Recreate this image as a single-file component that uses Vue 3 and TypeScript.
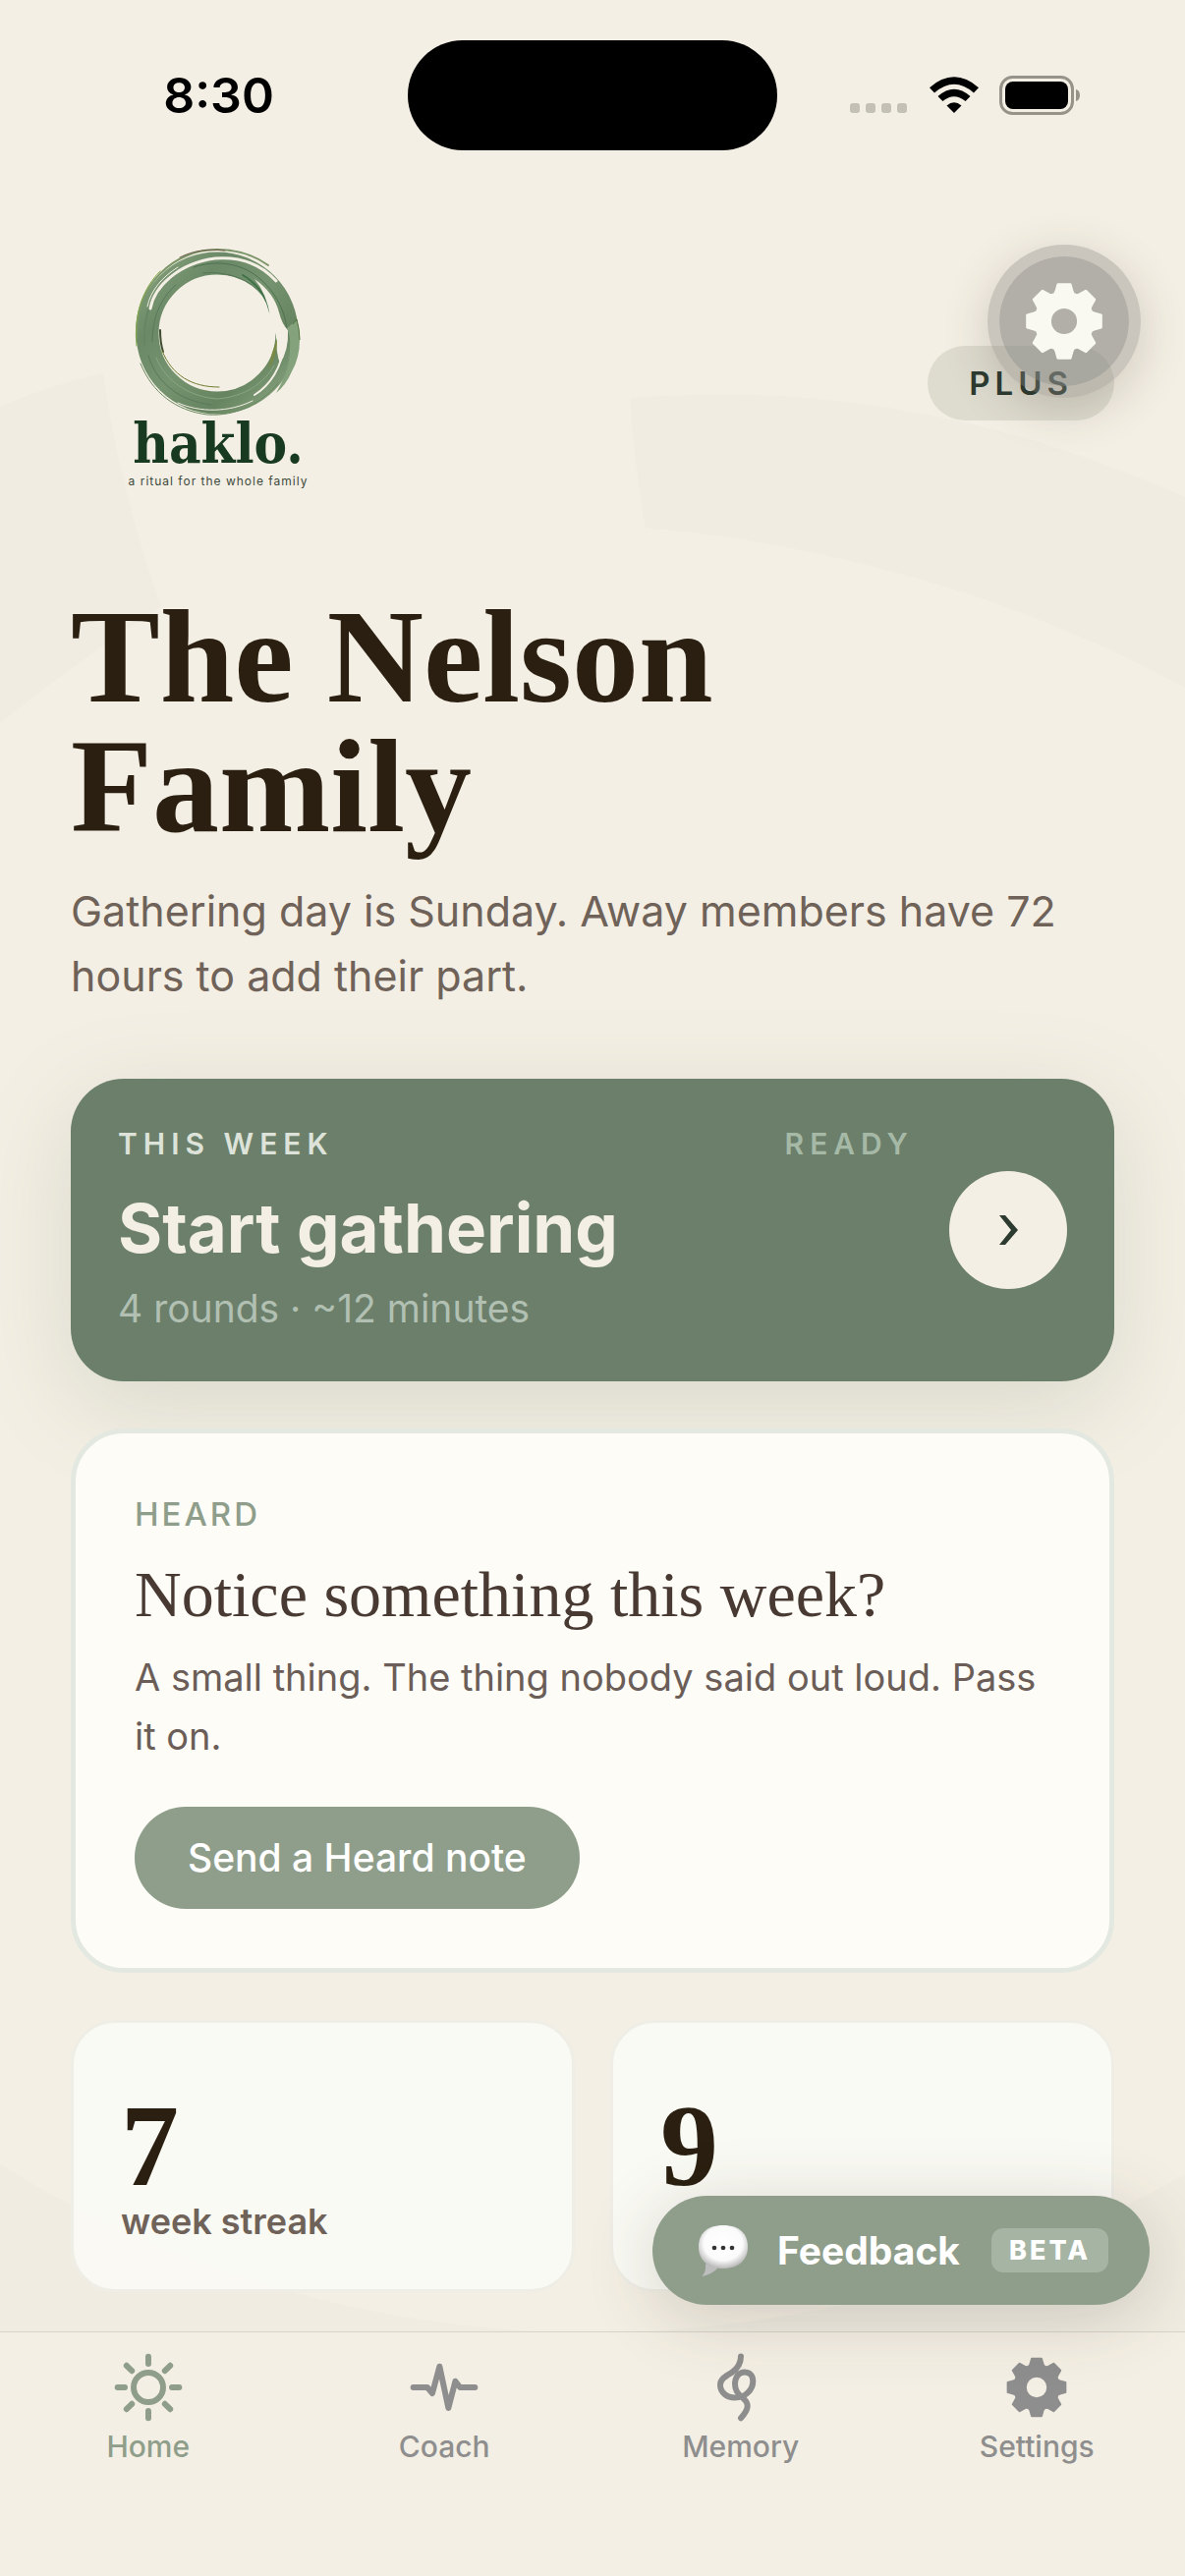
<script setup lang="ts">
interface Tab {
  id: string
  label: string
  active: boolean
}

interface Stat {
  value: number
  label: string
}

const tabs: Tab[] = [
  { id: 'home', label: 'Home', active: true },
  { id: 'coach', label: 'Coach', active: false },
  { id: 'memory', label: 'Memory', active: false },
  { id: 'settings', label: 'Settings', active: false },
]

const stats: Stat[] = [
  { value: 7, label: 'week streak' },
  { value: 9, label: '' },
]

// Outline of an eight-toothed cog centred on 0,0 with a radius of 100.
function cogPath(): string {
  const tooth: [number, number][] = [
    [-24, -71],
    [-21, -78],
    [-16, -96],
    [16, -96],
    [21, -78],
    [24, -71],
  ]
  const points: string[] = []
  for (let i = 0; i < 8; i++) {
    const a = (i * Math.PI) / 4
    for (const [x, y] of tooth) {
      const px = x * Math.cos(a) - y * Math.sin(a)
      const py = x * Math.sin(a) + y * Math.cos(a)
      points.push(`${px.toFixed(1)} ${py.toFixed(1)}`)
    }
  }
  return `M${points.join('L')}ZM37 0A37 37 0 1 0 -37 0A37 37 0 1 0 37 0Z`
}

const cog = cogPath()
</script>

<template>
  <div class="page">
    <svg class="backdrop" viewBox="0 0 1206 2622" preserveAspectRatio="none" aria-hidden="true">
      <path d="M0 414Q50 392 105 380Q122 500 164 617Q72 678 0 736Z" />
      <path d="M641 405Q930 382 1206 506V700Q960 566 657 537Q645 472 641 405Z" />
      <path d="M0 2203Q270 2370 600 2375Q930 2370 1206 2213V2400H0Z" />
    </svg>

    <div class="status">
      <time class="clock">8:30</time>
      <div class="island"></div>
      <div class="signals">
        <svg width="60" height="40" viewBox="0 0 60 40" aria-hidden="true">
          <g fill="#c3c0b5">
            <rect x="0" y="28" width="10" height="10" rx="3" />
            <rect x="16" y="28" width="10" height="10" rx="3" />
            <rect x="32" y="28" width="10" height="10" rx="3" />
            <rect x="48" y="28" width="10" height="10" rx="3" />
          </g>
        </svg>
        <svg width="52" height="40" viewBox="0 0 52 40" aria-hidden="true">
          <path d="M26 38L18.500 30.500Q26 24 33.500 30.500Z" />
          <path d="M9.500 21Q26 6.500 42.500 21L37.600 26Q26 16.500 14.400 26Z" />
          <path d="M1 12.200Q26 -9.500 51 12.200L46 17.400Q26 0 6 17.400Z" />
        </svg>
        <svg width="84" height="40" viewBox="0 0 84 40" aria-hidden="true">
          <rect x="1.500" y="1.500" width="73" height="37" rx="12" fill="none" stroke="#96938b" stroke-width="3" />
          <rect x="6" y="6" width="64" height="28" rx="8" />
          <path d="M78 14Q82 15 82 20Q82 25 78 26Z" fill="#96938b" />
        </svg>
      </div>
    </div>

    <header class="header">
      <div class="logo">
        <svg class="ring" viewBox="0 0 170 172" aria-hidden="true">
          <defs>
            <linearGradient id="brush" x1="0" y1="0" x2="1" y2="1">
              <stop offset="0" stop-color="#85a07c" />
              <stop offset="0.250" stop-color="#6b8966" />
              <stop offset="0.500" stop-color="#75936f" />
              <stop offset="0.750" stop-color="#66845f" />
              <stop offset="1" stop-color="#8ba683" />
            </linearGradient>
          </defs>
          <circle cx="84" cy="87" r="71" fill="none" stroke="url(#brush)" stroke-width="23" />
          <g fill="none" stroke-linecap="round">
            <path d="M2 92C0 38 40 2 84 2C106 2 122 8 136 18" stroke="#7c966a" stroke-width="2" />
            <path d="M46 10C60 3 74 1 92 3" stroke="#6b5a48" stroke-width="1" />
            <path d="M2 100C-1 68 8 42 26 24" stroke="#7fa84c" stroke-width="1" />
            <path d="M6 118C18 148 42 166 74 170C104 172 130 158 146 138" stroke="#6a8a60" stroke-width="1" />
            <path d="M10 100C8 66 20 40 42 24" stroke="#668663" stroke-width="2" />
            <path d="M18 96C18 72 26 52 42 38M14 110C22 138 46 156 78 160" stroke="#58795a" stroke-width="1" />
            <path d="M22 112C32 138 58 152 84 154C112 152 132 138 142 120" stroke="#88a682" stroke-width="1" />
            <path d="M60 20C90 10 122 18 142 48C150 60 154 72 155 84" stroke="#4f7152" stroke-width="1" />
            <path d="M26 84C26 94 27 100 29 106" stroke="#3d4d30" stroke-width="2" />
            <path d="M16 62C20 40 44 16 82 11C108 9 128 16 144 34" stroke="#f4efe4" stroke-width="3" />
            <path d="M13 60C16 44 28 30 44 20" stroke="#f4efe4" stroke-width="1" />
            <path d="M29 94C36 122 60 140 86 143" stroke="#f4efe4" stroke-width="2" />
            <path d="M28 105C38 130 58 142 86 142" stroke="#6f7d31" stroke-width="1" />
            <path d="M44 158C66 168 96 168 120 156" stroke="#f4efe4" stroke-width="1" />
            <path d="M152 98C150 122 138 140 122 150" stroke="#f4efe4" stroke-width="2" />
            <path d="M110 28C124 36 134 50 138 66" stroke="#3f7148" stroke-width="2" />
            <path d="M70 26C90 24 112 30 124 42" stroke="#557755" stroke-width="1" />
          </g>
          <path d="M122 32Q142 46 147 66Q150 78 156 84Q157 104 148 118Q144 108 144 90Q142 82 138 70Q134 46 122 32Z" fill="#f4efe4" />
          <path d="M145 92Q146 108 136 124Q139 108 145 92Z" fill="#7b8a44" />
          <path d="M160 78L165 74Q168 82 168 94Q168 112 160 126Q154 140 144 148Q158 124 158 104Q159 90 155 82Z" fill="#84a27c" />
          <path d="M161 78L165 73Q168 84 168 94" fill="none" stroke="#52733f" stroke-width="1" />
        </svg>
        <span class="wordmark">haklo.</span>
        <span class="tagline">a ritual for the whole family</span>
      </div>
      <span class="plan">PLUS</span>
    </header>

    <button class="gear" type="button" aria-label="Settings">
      <svg width="78" height="78" viewBox="-100 -100 200 200" aria-hidden="true">
        <path class="cog" :d="cog" />
      </svg>
    </button>

    <main class="content">
      <h1 class="title">The Nelson Family</h1>
      <p class="intro">Gathering day is Sunday. Away members have 72 hours to add their part.</p>

      <section class="week">
        <div class="week-text">
          <div class="week-row">
            <span class="week-label">THIS WEEK</span>
            <span class="week-state">READY</span>
          </div>
          <h2 class="week-title">Start gathering</h2>
          <p class="week-meta">4 rounds · ~12 minutes</p>
        </div>
        <button class="go" type="button" aria-label="Start gathering">
          <svg width="22" height="32" viewBox="0 0 22 32" aria-hidden="true">
            <path d="M2 1H8L21 16L8 31H2L14 16Z" fill="#2c3a30" />
          </svg>
        </button>
      </section>

      <section class="heard">
        <span class="heard-label">HEARD</span>
        <h2 class="heard-title">Notice something this week?</h2>
        <p class="heard-text">A small thing. The thing nobody said out loud. Pass it on.</p>
        <button class="send" type="button">Send a Heard note</button>
      </section>

      <div class="stats">
        <div v-for="s in stats" :key="s.value" class="stat">
          <span class="stat-value">{{ s.value }}</span>
          <span class="stat-label">{{ s.label }}</span>
        </div>
      </div>
    </main>

    <nav class="tabs">
      <a v-for="t in tabs" :key="t.id" class="tab" :class="{ active: t.active }" href="#">
        <svg v-if="t.id === 'home'" class="line" viewBox="0 0 24 24" aria-hidden="true">
          <circle cx="12" cy="12" r="5" />
          <path d="M12 1.550V4M12 20V22.450M1.550 12H4M20 12H22.450M4.600 4.600L6.400 6.400M17.600 17.600L19.400 19.400M4.600 19.400L6.400 17.600M17.600 6.400L19.400 4.600" />
        </svg>
        <svg v-else-if="t.id === 'coach'" class="line" viewBox="0 0 24 24" aria-hidden="true">
          <path d="M1.550 12H6.300L8 14L10.450 4.900L13.450 19L15.800 9.900L17.400 12H22.450" />
        </svg>
        <svg v-else-if="t.id === 'memory'" class="line" viewBox="0 0 24 24" aria-hidden="true">
          <path d="M12 1.500C12 3.800 11 5.500 9 6.900C6.800 8.200 5 9.200 5 11.200C5 13.700 7.200 15.500 10 15.500C13.500 15.500 16.100 12.800 16.100 9.900C16.100 8 15 6.800 13.300 6.800C11.300 6.800 10 8.500 10 10.900C10 13 11 14.300 12.400 15.400C15 17.400 14.800 19.300 12 22.400" />
        </svg>
        <svg v-else class="solid" viewBox="-118 -118 236 236" aria-hidden="true">
          <path class="cog" :d="cog" />
        </svg>
        <span>{{ t.label }}</span>
      </a>
    </nav>

    <button class="feedback" type="button">
      <svg width="54" height="54" viewBox="0 0 54 54" aria-hidden="true">
        <defs>
          <radialGradient id="bubble" cx="0.500" cy="0.420" r="0.580">
            <stop offset="0" stop-color="#ffffff" />
            <stop offset="0.680" stop-color="#fbfbfb" />
            <stop offset="1" stop-color="#b9b9b9" />
          </radialGradient>
        </defs>
        <path d="M9 40Q10 49 5 53Q16 51 22 44Z" fill="#bdbdbd" />
        <path d="M27 1C44 1 52 10 52 23C52 36 43 45 27 45C11 45 2 36 2 23C2 10 10 1 27 1Z" fill="url(#bubble)" />
        <circle cx="18" cy="24" r="2.300" fill="#333" />
        <circle cx="27" cy="24" r="2.300" fill="#333" />
        <circle cx="36" cy="24" r="2.300" fill="#333" />
      </svg>
      <span class="feedback-text">Feedback</span>
      <span class="beta">BETA</span>
    </button>
  </div>
</template>

<style>
body {
  background: #f4efe4;
}
</style>

<style scoped>
.page {
  position: relative;
  display: flex;
  flex-direction: column;
  min-height: 100vh;
  overflow: hidden;
  background: #f4efe4;
  color: #2a1f10;
  font-family: Inter, "Liberation Sans", sans-serif;
}

h1,
h2,
p {
  margin: 0;
}

button {
  border: 0;
  padding: 0;
  font-family: inherit;
  cursor: pointer;
}

.backdrop {
  position: absolute;
  inset: 0;
  width: 100%;
  height: 100%;
  fill: #f0ece1;
}

.status,
.header,
.content,
.tabs {
  position: relative;
}

.status {
  display: grid;
  grid-template-columns: 1fr 376px 1fr;
  align-items: center;
  height: 194px;
  color: #000;
}

.clock {
  padding-left: 30px;
  text-align: center;
  font-size: 50px;
  font-weight: 600;
  line-height: 60px;
}

.island {
  height: 112px;
  border-radius: 56px;
  background: #000;
}

.signals {
  display: flex;
  justify-content: center;
  gap: 20px;
  padding-right: 32px;
}

.header {
  display: flex;
  align-items: center;
  justify-content: space-between;
  margin-top: 46px;
  padding: 0 72px;
}

.logo {
  display: flex;
  flex-direction: column;
  align-items: center;
  width: 300px;
  height: 288px;
  padding-top: 12px;
}

.ring {
  width: 170px;
  height: 172px;
  margin-bottom: 2px;
}

.wordmark {
  color: #173a20;
  font-family: "DejaVu Serif Condensed", "DejaVu Serif", serif;
  font-size: 56px;
  font-weight: 700;
  line-height: 50px;
}

.tagline {
  margin-top: 8px;
  color: #3c4a3c;
  font-size: 12px;
  letter-spacing: 1px;
  line-height: 12px;
  white-space: nowrap;
}

.plan {
  padding: 0 42px;
  border-radius: 38px;
  background: #dedccf;
  color: #2c3a30;
  font-size: 33px;
  font-weight: 600;
  letter-spacing: 5px;
  line-height: 76px;
}

.gear {
  position: absolute;
  z-index: 2;
  top: 249px;
  right: 45px;
  display: flex;
  align-items: center;
  justify-content: center;
  width: 156px;
  height: 156px;
  border: 12px solid rgba(130, 126, 120, 0.36);
  border-radius: 50%;
  background: rgba(135, 136, 131, 0.62);
  background-clip: padding-box;
  box-shadow: 0 12px 48px rgba(60, 50, 40, 0.2);
  color: rgba(252, 252, 246, 0.94);
}

.cog {
  fill: currentColor;
  fill-rule: evenodd;
  stroke: currentColor;
  stroke-width: 7;
  stroke-linejoin: round;
}

.gear .cog {
  fill: #f9f9f2;
  stroke: #f9f9f2;
}

.content {
  display: flex;
  flex-direction: column;
  padding: 62px 72px 40px;
}

.title {
  font-family: "Liberation Serif", serif;
  font-size: 136px;
  font-weight: 700;
  line-height: 132px;
  max-width: 900px;
}

.intro {
  margin-top: 28px;
  color: #6f6259;
  font-size: 43px;
  line-height: 66px;
}

.week {
  display: flex;
  align-items: center;
  gap: 36px;
  margin-top: 72px;
  padding: 45px 48px;
  border-radius: 54px;
  background: #6b7f6b;
  box-shadow: 0 24px 96px rgba(107, 127, 107, 0.2);
}

.week-text {
  flex: 1;
}

.week-row {
  display: flex;
  justify-content: space-between;
  font-size: 30px;
  font-weight: 600;
  letter-spacing: 6px;
  line-height: 42px;
}

.week-label {
  color: #dde3d9;
}

.week-state {
  color: #a5b9a6;
}

.week-title {
  margin-top: 21px;
  color: #f4efe4;
  font-size: 69px;
  font-weight: 700;
  line-height: 88px;
}

.week-meta {
  margin-top: 9px;
  color: #b1c0b2;
  font-size: 39px;
  line-height: 58px;
}

.go {
  display: flex;
  align-items: center;
  justify-content: center;
  width: 120px;
  height: 120px;
  border-radius: 50%;
  background: #f4efe4;
}

.heard {
  display: flex;
  flex-direction: column;
  align-items: flex-start;
  margin-top: 48px;
  padding: 60px;
  border: 5px solid #e3e9e0;
  border-radius: 54px;
  background: #fdfcf7;
}

.heard-label {
  color: #8f9e8b;
  font-size: 33px;
  font-weight: 500;
  letter-spacing: 3px;
  line-height: 44px;
}

.heard-title {
  margin-top: 24px;
  color: #483a32;
  font-family: "Liberation Serif", serif;
  font-size: 66px;
  font-weight: 400;
  line-height: 72px;
}

.heard-text {
  margin-top: 18px;
  color: #6b5d57;
  font-size: 38px;
  line-height: 60px;
}

.send {
  margin-top: 42px;
  padding: 0 54px;
  border-radius: 52px;
  background: #8f9e8b;
  color: #fff;
  font-size: 39px;
  font-weight: 500;
  line-height: 104px;
}

.stats {
  display: grid;
  grid-template-columns: 1fr 1fr;
  gap: 36px;
  margin-top: 48px;
}

.stat {
  display: flex;
  flex-direction: column;
  padding: 72px 48px 47px;
  border: 3px solid #efeee6;
  border-radius: 45px;
  background: rgba(251, 251, 245, 0.9);
}

.stat-value {
  font-family: "Liberation Serif", serif;
  font-size: 118px;
  font-weight: 700;
  line-height: 108px;
}

.stat-label {
  height: 44px;
  color: #6f6259;
  font-size: 36px;
  font-weight: 600;
  line-height: 44px;
}

.tabs {
  display: grid;
  grid-template-columns: repeat(4, 1fr);
  margin-top: auto;
  padding: 20px 0 114px;
  border-top: 1px solid #d8d4c8;
  background: #f4efe4;
}

.tab {
  display: flex;
  flex-direction: column;
  align-items: center;
  gap: 6px;
  color: #8e8e8e;
  font-size: 30px;
  font-weight: 500;
  line-height: 36px;
  text-decoration: none;
}

.tab.active {
  color: #8f9e8b;
}

.tab svg {
  width: 72px;
  height: 72px;
}

.line {
  fill: none;
  stroke: currentColor;
  stroke-width: 2;
  stroke-linecap: round;
  stroke-linejoin: round;
}

.feedback {
  position: absolute;
  z-index: 2;
  right: 36px;
  bottom: 276px;
  display: flex;
  align-items: center;
  height: 111px;
  padding: 0 42px 0 45px;
  border-radius: 56px;
  background: #8f9e8b;
  box-shadow: 0 12px 72px rgba(60, 50, 40, 0.2);
  color: #fff;
}

.feedback-text {
  margin: 0 32px 0 28px;
  font-size: 39px;
  font-weight: 700;
}

.beta {
  padding: 0 18px;
  border-radius: 12px;
  background: #a6b4a4;
  font-size: 27px;
  font-weight: 800;
  letter-spacing: 3px;
  line-height: 45px;
}
</style>
